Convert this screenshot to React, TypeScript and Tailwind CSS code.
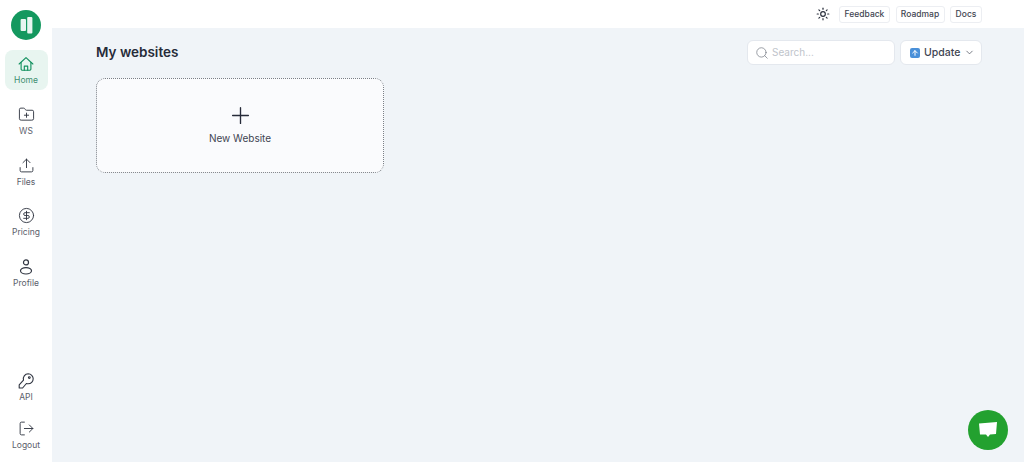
import { ChevronDown, FolderPlus, LogOut, Plus, Search, Sun, Upload, CircleDollarSign, ArrowUp } from "lucide-react";
import type { ReactNode } from "react";

function NavItem({ icon, label, active }: { icon: ReactNode; label: string; active?: boolean }) {
  return (
    <div
      className={`flex h-10 w-[43px] flex-col items-center justify-center rounded-lg pt-[1px] ${
        active ? "bg-[#e8f5f0] text-[#13915f]" : "text-[#2f3440]"
      }`}
    >
      {icon}
      <span className={`mt-[2px] text-[8.5px] leading-[12px] ${active ? "text-[#3f8f70]" : "text-[#5b606b]"}`}>{label}</span>
    </div>
  );
}

function HomeIcon() {
  return (
    <svg width="16" height="16" viewBox="0 0 17 16" fill="none" stroke="currentColor" strokeWidth="1.2" strokeLinecap="round" strokeLinejoin="round">
      <path d="M1.2 8 L8.5 1.2 L15.8 8" />
      <path d="M3.3 6.5 V13.2 a1.5 1.5 0 0 0 1.5 1.5 H12.2 a1.5 1.5 0 0 0 1.5 -1.5 V6.5" />
      <path d="M6.7 14.6 V10.2 H10.3 V14.6" />
    </svg>
  );
}

function ProfileIcon() {
  return (
    <svg width="16" height="16" viewBox="0 0 16 16" fill="none" stroke="currentColor" strokeWidth="1.2">
      <circle cx="8" cy="3.4" r="2.5" />
      <ellipse cx="8" cy="11.8" rx="5.5" ry="3.2" />
    </svg>
  );
}

function KeyIcon() {
  return (
    <svg width="16" height="16" viewBox="0 0 16 16" fill="none" stroke="currentColor" strokeWidth="1.1" strokeLinejoin="round">
      <path d="M10.2 0.8 a5 5 0 0 1 0 10 c-.7 0-1.2-.1-1.8-.3 L4.6 15 H1.2 v-3.2 l4.3-4.6 A5 5 0 0 1 10.2 0.8 z" />
      <circle cx="11.3" cy="4.6" r="0.9" />
    </svg>
  );
}

function Logo() {
  return (
    <svg width="30" height="30" viewBox="0 0 30 30">
      <circle cx="15" cy="15" r="15" fill="#14985f" />
      <rect x="9.6" y="9" width="5.4" height="12" rx="1" fill="#e8f5f0" />
      <rect x="16.2" y="7" width="5.2" height="16.5" rx="1" fill="#e8f5f0" />
    </svg>
  );
}

export default function App() {
  return (
    <div className="flex h-[462px] w-[1024px] overflow-hidden bg-white font-['Inter',sans-serif] text-[#2a2f3c]">
      <aside className="flex w-[52px] shrink-0 flex-col items-center pb-[7px] pt-[10px]">
        <Logo />
        <nav className="mt-[10px] flex flex-col items-center gap-[10.75px]">
          <NavItem active label="Home" icon={<HomeIcon />} />
          <NavItem label="WS" icon={<FolderPlus size={17} strokeWidth={1.3} />} />
          <NavItem label="Files" icon={<Upload size={17} strokeWidth={1.3} />} />
          <NavItem label="Pricing" icon={<CircleDollarSign size={17} strokeWidth={1.3} />} />
          <NavItem label="Profile" icon={<ProfileIcon />} />
        </nav>
        <div className="mt-auto flex flex-col items-center gap-[8px]">
          <NavItem label="API" icon={<KeyIcon />} />
          <NavItem label="Logout" icon={<LogOut size={17} strokeWidth={1.3} />} />
        </div>
      </aside>

      <div className="flex min-w-0 flex-1 flex-col">
        <header className="flex h-[28px] shrink-0 items-center justify-end pr-[42px]">
          <Sun size={14} strokeWidth={2} className="mr-[9px] text-[#2a2f3c]" />
          <div className="flex gap-[5.5px] text-[8.5px] font-medium text-[#3f4552]">
            <span className="flex h-[17px] w-[51px] items-center justify-center rounded-[3px] border border-[#eceef2]">Feedback</span>
            <span className="flex h-[17px] w-[49px] items-center justify-center rounded-[3px] border border-[#eceef2]">Roadmap</span>
            <span className="flex h-[17px] w-[32px] items-center justify-center rounded-[3px] border border-[#eceef2]">Docs</span>
          </div>
        </header>

        <main className="relative flex-1 bg-[#f0f4f8] pl-[44px] pr-[42px] pt-[12px]">
          <div className="flex items-center justify-between">
            <h1 className="text-[13.5px] font-semibold text-[#262b39]">My websites</h1>
            <div className="flex items-center gap-[5px]">
              <div className="flex h-[25px] w-[148px] items-center gap-[3px] rounded-md border border-[#e4e8ee] bg-white pl-[7px]">
                <Search size={14} strokeWidth={1.2} className="text-[#70757f]" />
                <span className="text-[10px] text-[#c0c4cb]">Search...</span>
              </div>
              <div className="flex h-[25px] w-[82px] items-center rounded-md border border-[#e4e8ee] bg-white pl-[9px]">
                <span className="flex h-[10px] w-[10px] items-center justify-center rounded-[2px] bg-[#4a90d9] text-white">
                  <ArrowUp size={8} strokeWidth={3} />
                </span>
                <span className="ml-[4px] text-[10.5px] font-medium text-[#3f4552]">Update</span>
                <ChevronDown size={11} strokeWidth={1.5} className="ml-[4px] text-[#3f4552]" />
              </div>
            </div>
          </div>

          <button className="mt-[13px] flex h-[95px] w-[288px] flex-col items-center justify-center rounded-[9px] border border-dotted border-[#7a7f86] bg-[#fafbfd] pt-[2px]">
            <Plus size={27} strokeWidth={1.2} className="mt-[-5px] text-[#262b39]" />
            <span className="mt-[2px] text-[10px] text-[#3f4552]">New Website</span>
          </button>

          <div className="absolute bottom-[12px] right-[16px] flex h-[40px] w-[40px] items-center justify-center rounded-full bg-[#23a12f]">
            <svg width="22" height="20" viewBox="0 0 22 20" fill="white">
              <path d="M2 3.5 L20 2 L19 14 L13 14.5 L11 17 L9 14.5 L3 14.5 Z" />
            </svg>
          </div>
        </main>
      </div>
    </div>
  );
}
